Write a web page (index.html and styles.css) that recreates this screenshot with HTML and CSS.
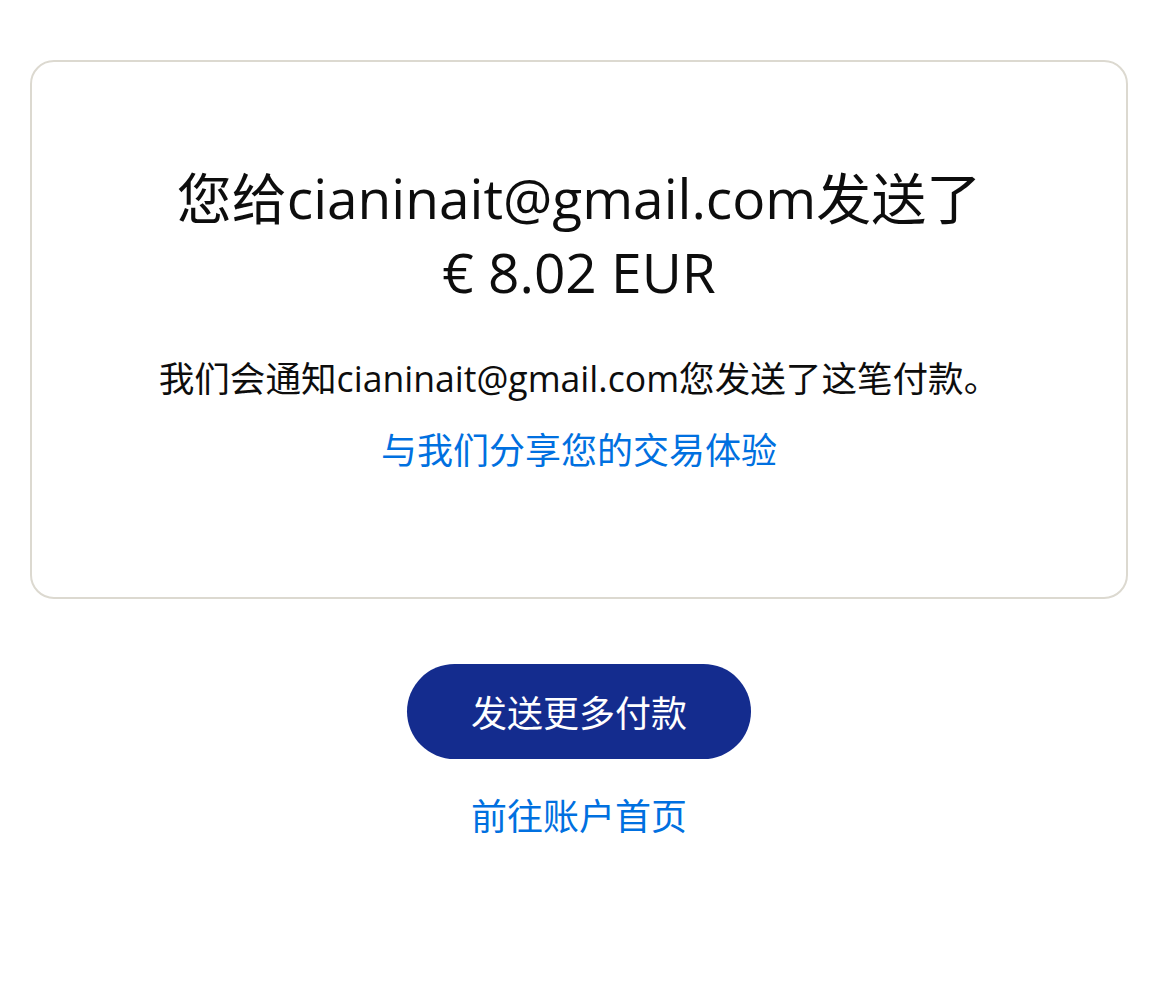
FILE: index.html
```html
<!DOCTYPE html>
<html lang="zh-CN">
<head>
  <meta charset="UTF-8">
  <title>付款已发送</title>
  <meta name="viewport" content="width=device-width, initial-scale=1.0">
  <link rel="stylesheet" href="styles.css">
</head>
<body>
  <div class="page">
    <div class="card">
      <h1 class="title">您给cianinait@gmail.com发送了<br>€ 8.02 EUR</h1>
      <p class="notice">我们会通知cianinait@gmail.com您发送了这笔付款。</p>
      <a class="link share-link" href="#">与我们分享您的交易体验</a>
    </div>

    <div class="actions">
      <button class="btn btn-primary">发送更多付款</button>
      <a class="link home-link" href="#">前往账户首页</a>
    </div>
  </div>
</body>
</html>
```

FILE: styles.css
```css
body {
  margin: 0;
  padding: 0;
  background: #fff;
  color: #0d0d0d;
  font-family: "Open Sans", "Noto Sans CJK SC", sans-serif;
}

.page {
  padding: 60px 40px 60px 30px;
}

.card {
  border: 2px solid #dcd9d0;
  border-radius: 24px;
  padding: 99px 30px 122px;
  text-align: center;
}

.title {
  margin: 0;
  font-size: 55px;
  font-weight: 400;
  line-height: 74px;
}

.notice {
  margin: 45px 0 25px;
  font-size: 35.6px;
  line-height: 48px;
}

.link {
  color: #0070e0;
  text-decoration: none;
  font-size: 36px;
  line-height: 48px;
}

.share-link {
  display: inline-block;
}

.actions {
  display: flex;
  flex-direction: column;
  align-items: center;
  margin-top: 65px;
  gap: 34px;
}

.btn {
  border: none;
  cursor: pointer;
  font-family: inherit;
}

.btn-primary {
  width: 344px;
  height: 95px;
  border-radius: 48px;
  background: #142c8e;
  color: #fff;
  font-size: 36px;
}
```
